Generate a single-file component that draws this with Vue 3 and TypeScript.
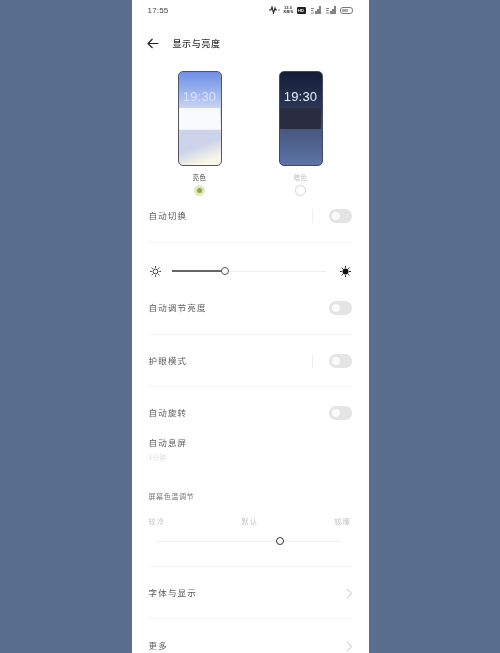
<script setup lang="ts">
const tempLabels: string[] = ['较冷', '默认', '较暖']
</script>

<template>
  <div class="page">
    <main class="panel">
      <header class="status">
        <span class="time">17:55</span>
        <div class="status-icons">
          <svg width="12" height="8" viewBox="0 0 12 8"><path d="M1 4h2l1-3 1.500 6L7 2l.8 2H9" fill="none" stroke="#333" stroke-width="1.200"/><circle cx="11" cy="4" r=".7" fill="#555"/></svg>
          <span class="net">12.0<br />KB/S</span>
          <span class="hd">HD</span>
          <svg v-for="n in 2" :key="n" width="11" height="8" viewBox="0 0 11 8"><path d="M1 2.500h3M1 4.500h2.500M1 7h3" stroke="#777" stroke-width=".9"/><path d="M6 8V5M8 8V3M10 8V0" stroke="#333" stroke-width="1.200"/></svg>
          <span class="battery"><i></i></span>
        </div>
      </header>

      <div class="title-bar">
        <svg width="12" height="11" viewBox="0 0 12 11"><path d="M11.500 5.500H1M5.500 1 1 5.500 5.500 10" fill="none" stroke="#222" stroke-width="1.200"/></svg>
        <h1>显示与亮度</h1>
      </div>

      <section class="themes">
        <div class="theme">
          <div class="phone light">
            <span class="clock">19:30</span>
            <span class="card"></span>
          </div>
          <span class="theme-name active">亮色</span>
          <span class="radio checked"><i></i></span>
        </div>
        <div class="theme">
          <div class="phone dark">
            <span class="clock">19:30</span>
            <span class="card"></span>
          </div>
          <span class="theme-name">暗色</span>
          <span class="radio"></span>
        </div>
      </section>

      <div class="row auto-row">
        <span class="label">自动切换</span>
        <span class="sep"></span>
        <span class="toggle"><i></i></span>
      </div>
      <div class="divider"></div>

      <div class="brightness">
        <svg class="sun" width="11" height="11" viewBox="0 0 11 11"><circle cx="5.500" cy="5.500" r="2.400" fill="#fff" stroke="#333"/><path d="M5.500 0v1.800M5.500 9.200V11M0 5.500h1.800M9.200 5.500H11M1.600 1.600l1.300 1.300M8.100 8.100l1.300 1.300M1.600 9.400l1.300-1.300M8.100 2.900l1.300-1.300" stroke="#444"/></svg>
        <div class="track">
          <span class="fill"></span>
          <span class="knob"></span>
        </div>
        <svg class="sun" width="11" height="11" viewBox="0 0 11 11"><circle cx="5.500" cy="5.500" r="3" fill="#111"/><path d="M5.500 0v1.800M5.500 9.200V11M0 5.500h1.800M9.200 5.500H11M1.600 1.600l1.300 1.300M8.100 8.100l1.300 1.300M1.600 9.400l1.300-1.300M8.100 2.900l1.300-1.300" stroke="#222"/></svg>
      </div>

      <div class="row bright-row">
        <span class="label">自动调节亮度</span>
        <span class="toggle"><i></i></span>
      </div>
      <div class="divider"></div>

      <div class="row eye-row">
        <span class="label">护眼模式</span>
        <span class="sep"></span>
        <span class="toggle"><i></i></span>
      </div>
      <div class="divider"></div>

      <div class="row rotate-row">
        <span class="label">自动旋转</span>
        <span class="toggle"><i></i></span>
      </div>

      <div class="sleep">
        <span class="label">自动息屏</span>
        <span class="sub">1分钟</span>
      </div>

      <section class="temperature">
        <span class="temp-title">屏幕色温调节</span>
        <div class="temp-labels">
          <span v-for="t in tempLabels" :key="t">{{ t }}</span>
        </div>
        <div class="temp-track"><span class="temp-knob"></span></div>
      </section>
      <div class="divider"></div>

      <div class="row link-row first-link">
        <span class="label">字体与显示</span>
        <svg width="7" height="11" viewBox="0 0 7 11"><path d="m1 1 4.500 4.500L1 10" fill="none" stroke="#d8d8d8" stroke-width="1.200"/></svg>
      </div>
      <div class="divider"></div>
      <div class="row link-row">
        <span class="label">更多</span>
        <svg width="7" height="11" viewBox="0 0 7 11"><path d="m1 1 4.500 4.500L1 10" fill="none" stroke="#d8d8d8" stroke-width="1.200"/></svg>
      </div>
    </main>
  </div>
</template>

<style scoped>
.page {
  width: 500px;
  height: 653px;
  overflow: hidden;
  background: #5a6e8f;
  display: flex;
  justify-content: center;
  font-family: "Noto Sans CJK SC", "Noto Sans", sans-serif;
}
.panel {
  width: 237px;
  height: 653px;
  background: #fff;
  overflow: hidden;
  color: #555;
  display: flex;
  flex-direction: column;
  filter: blur(.4px);
}
.panel > * { flex: none; }
.status {
  height: 20px;
  padding: 0 16px;
  display: flex;
  align-items: center;
  justify-content: space-between;
}
.time {
  font-family: "Liberation Sans", sans-serif;
  font-size: 8px;
  color: #444;
  letter-spacing: .2px;
}
.status-icons {
  display: flex;
  align-items: center;
  gap: 4px;
}
.net {
  font-family: "Liberation Sans", sans-serif;
  font-size: 4px;
  line-height: 4.500px;
  color: #333;
  width: 9px;
  font-weight: 700;
  text-align: center;
  white-space: nowrap;
}
.hd {
  width: 9px;
  height: 7px;
  border-radius: 1px;
  background: #222;
  color: #fff;
  font: 700 4px/7px "Liberation Sans", sans-serif;
  text-align: center;
}
.battery {
  width: 13px;
  height: 7px;
  border: 1px solid #777;
  border-radius: 3px;
  padding: 1px;
  box-sizing: border-box;
  display: block;
}
.battery i {
  display: block;
  width: 6px;
  height: 100%;
  background: #aaa;
  border-radius: 1px;
}
.title-bar {
  height: 46px;
  padding-left: 15px;
  display: flex;
  align-items: center;
  gap: 14px;
}
.title-bar h1 {
  margin: 0;
  font-size: 9px;
  font-weight: 500;
  letter-spacing: .6px;
  color: #333;
}
.themes {
  margin-top: 5px;
  padding-left: 46px;
  display: flex;
  gap: 57px;
}
.theme {
  width: 44px;
  display: flex;
  flex-direction: column;
  align-items: center;
}
.phone {
  width: 44px;
  height: 95px;
  box-sizing: border-box;
  border-radius: 5px;
  display: flex;
  flex-direction: column;
  align-items: center;
  overflow: hidden;
}
.phone.light {
  border: 1.500px solid #55555c;
  background:
    linear-gradient(160deg, rgba(200, 208, 232, .9) 45%, rgba(251, 247, 230, .95) 80%) 0 58px / 100% 37px no-repeat,
    linear-gradient(180deg, #6f8fe6 0%, #a5baf0 25%, #cdd8f6 40%, #f0f2fa 60%);
}
.phone.dark {
  border: 1.500px solid #3f4a6b;
  background: linear-gradient(180deg, #141c38 0%, #2a3755 38%, #47587f 62%, #5d73a8 100%);
}
.clock {
  margin-top: 17px;
  font-family: "Liberation Sans", sans-serif;
  font-size: 13px;
  line-height: 16px;
  letter-spacing: .2px;
  color: #e9eefb;
}
.light .clock { color: #dbe3fb; }
.card {
  margin-top: 3px;
  width: 41px;
  height: 21px;
  border-radius: 1px;
}
.light .card { background: #f9fafd; }
.dark .card { background: #2a2d3f; }
.theme-name {
  margin-top: 5px;
  height: 13px;
  font-size: 6.500px;
  line-height: 13px;
  letter-spacing: .5px;
  color: #c2c2c2;
}
.theme-name.active { color: #444; }
.radio {
  margin-top: 1px;
  width: 11px;
  height: 11px;
  box-sizing: border-box;
  border-radius: 50%;
  border: 1px solid #d5d5d5;
  display: flex;
  align-items: center;
  justify-content: center;
}
.radio.checked {
  background: #dfe8bd;
  border-color: #dfe8bd;
}
.radio.checked i {
  width: 5px;
  height: 5px;
  border-radius: 50%;
  background: #8da55a;
}
.row {
  display: flex;
  align-items: center;
  padding: 0 17px;
  height: 26px;
}
.label {
  font-size: 8.500px;
  letter-spacing: 1.200px;
  color: #5a5a5a;
  line-height: 14px;
}
.row:not(.link-row) .label { margin-bottom: 2px; }
.sep {
  margin-left: auto;
  margin-right: 16px;
  width: 1px;
  height: 14px;
  background: #eee;
}
.toggle {
  margin-left: auto;
  width: 23px;
  height: 14px;
  border-radius: 7px;
  background: #e4e4e4;
  display: flex;
  align-items: center;
  padding-left: 3px;
  box-sizing: border-box;
}
.sep + .toggle { margin-left: 0; }
.toggle i {
  width: 8px;
  height: 8px;
  border-radius: 50%;
  background: #fafafa;
}
.divider {
  height: 1px;
  margin: 0 17px;
  background: #f4f4f4;
}
.auto-row { margin-top: 7px; }
.auto-row + .divider { margin-top: 13px; }
.brightness {
  margin-top: 22.500px;
  height: 11px;
  padding: 0 18px;
  display: flex;
  align-items: center;
  gap: 11px;
}
.track {
  flex: 1;
  margin-right: 3px;
  height: 1px;
  background: #eee;
  position: relative;
}
.fill {
  position: absolute;
  left: 0;
  top: -.5px;
  width: 53px;
  height: 2px;
  background: #666;
}
.knob {
  position: absolute;
  left: 49px;
  top: -4px;
  width: 8px;
  height: 8px;
  box-sizing: border-box;
  border-radius: 50%;
  border: 1.300px solid #555;
  background: #fff;
}
.bright-row { margin-top: 18px; }
.bright-row + .divider { margin-top: 13px; }
.eye-row { margin-top: 13px; }
.eye-row + .divider { margin-top: 12.500px; }
.rotate-row { margin-top: 13px; }
.sleep {
  margin-top: 9px;
  padding-left: 17px;
  display: flex;
  flex-direction: column;
}
.sub {
  margin-top: 3px;
  font-size: 6.500px;
  line-height: 11px;
  letter-spacing: .5px;
  color: #dcdcdc;
}
.temperature {
  margin-top: 27px;
  padding: 0 17px;
  display: flex;
  flex-direction: column;
}
.temp-title {
  font-size: 7px;
  line-height: 12px;
  letter-spacing: .6px;
  color: #777;
}
.temp-labels {
  margin-top: 13px;
  display: flex;
  justify-content: space-between;
  font-size: 7px;
  line-height: 12px;
  letter-spacing: 1.500px;
  color: #c4c4c4;
}
.temp-track {
  margin: 14px 12px 0 8px;
  height: 1px;
  background: #efefef;
  position: relative;
}
.temp-knob {
  position: absolute;
  left: 119px;
  top: -4px;
  width: 8px;
  height: 8px;
  box-sizing: border-box;
  border-radius: 50%;
  border: 1.500px solid #3a3a3a;
  background: #fff;
}
.temperature + .divider { margin-top: 24px; }
.link-row { margin-top: 13px; padding-right: 16px; }
.link-row + .divider { margin-top: 13px; }
.first-link { margin-top: 12px; }
.link-row svg { margin-left: auto; margin-top: 2px; }
</style>

<style>
html, body { margin: 0; background: #5a6e8f; }
</style>
